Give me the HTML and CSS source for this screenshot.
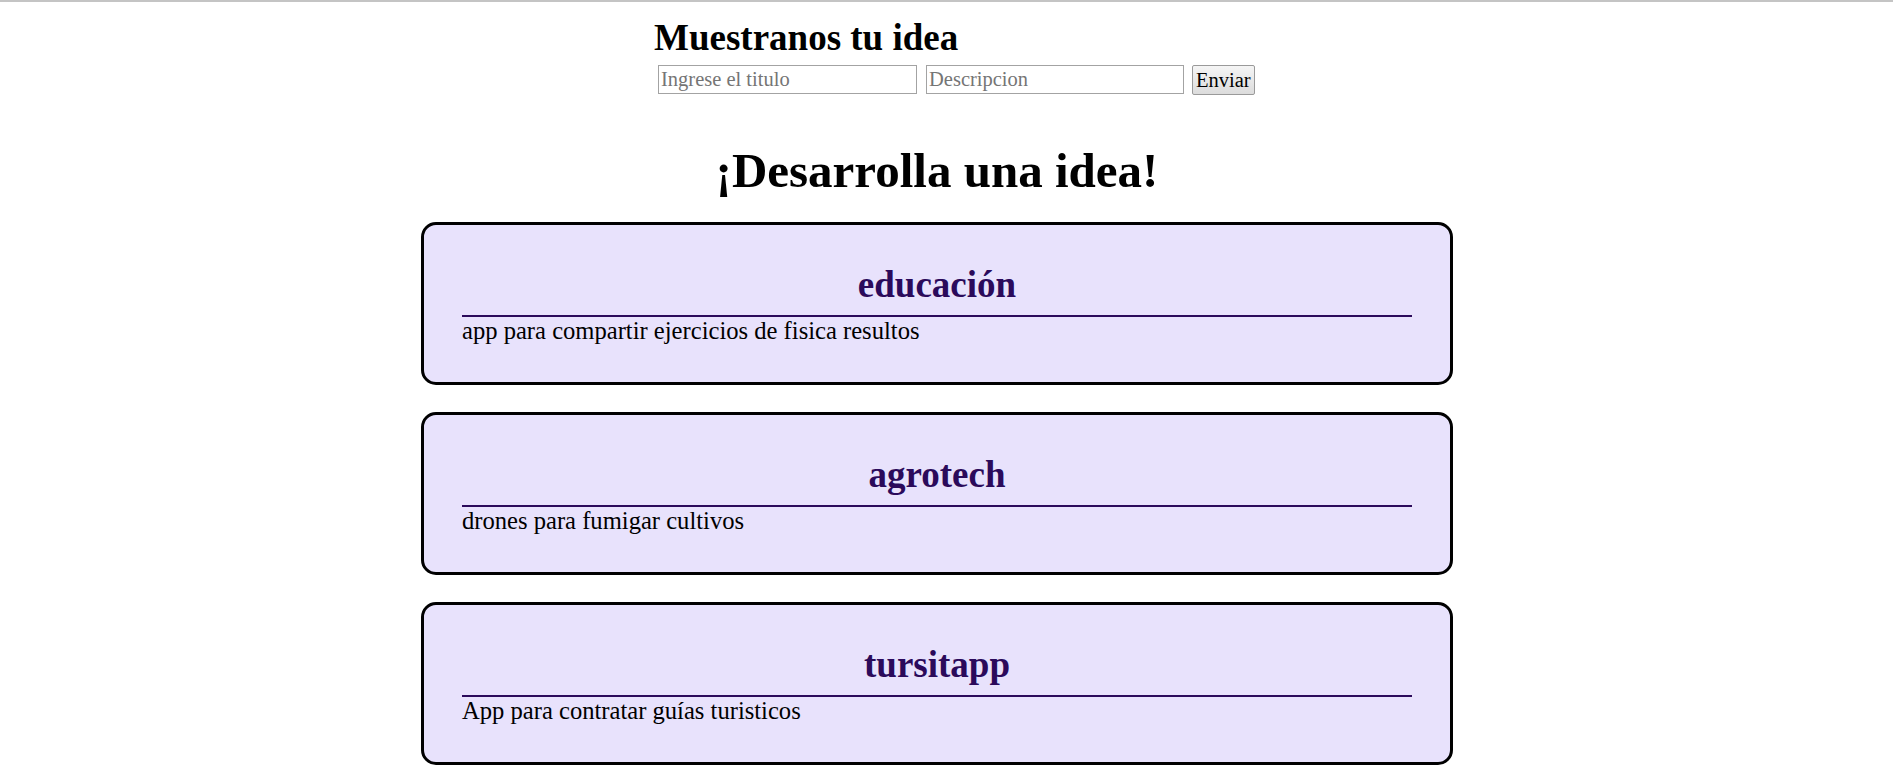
FILE: index.html
```html
<!DOCTYPE html>
<html lang="es">
<head>
<meta charset="utf-8">
<title>Ideas</title>
<link rel="stylesheet" href="styles.css">
</head>
<body>
<div class="page">
  <header class="intro">
    <h2 class="intro-title">Muestranos tu idea</h2>
    <form class="idea-form">
      <input type="text" class="field" placeholder="Ingrese el titulo">
      <input type="text" class="field field-desc" placeholder="Descripcion">
      <button type="button" class="send">Enviar</button>
    </form>
  </header>
  <main class="ideas">
    <h1 class="ideas-title">¡Desarrolla una idea!</h1>
    <article class="card">
      <h2 class="card-title">educación</h2>
      <p class="card-text">app para compartir ejercicios de fisica resultos</p>
    </article>
    <article class="card">
      <h2 class="card-title">agrotech</h2>
      <p class="card-text">drones para fumigar cultivos</p>
    </article>
    <article class="card">
      <h2 class="card-title">tursitapp</h2>
      <p class="card-text">App para contratar guías turisticos</p>
    </article>
  </main>
</div>
</body>
</html>
```

FILE: styles.css
```css
html {
  overflow-y: scroll;
  border-top: 2px solid #c4c4c4;
}

html::-webkit-scrollbar {
  width: 6px;
}

html::-webkit-scrollbar-track {
  background: #f0f0f0;
}

html::-webkit-scrollbar-thumb {
  background: #c1c1c1;
}

body {
  margin: 0;
  background: #ffffff;
  color: #000000;
  font-family: "Liberation Serif", "Times New Roman", serif;
  font-size: 24.6px;
}

.page {
  max-width: 1874px;
}

.intro {
  width: 566px;
  margin: 0 auto;
  padding-top: 14px;
}

.intro-title {
  margin: 0;
  font-size: 37px;
  font-weight: bold;
  white-space: nowrap;
}

.idea-form {
  display: flex;
  gap: 9px;
  margin: 6px 0 0 4px;
  white-space: nowrap;
}

.field {
  flex: 0 0 auto;
  box-sizing: border-box;
  width: 259px;
  height: 29px;
  margin: 0;
  padding: 0 2px;
  border: 1px solid #a3a3a3;
  border-radius: 0;
  background: #ffffff;
  font-family: "Liberation Serif", "Times New Roman", serif;
  font-size: 20.5px;
  color: #000000;
}

.field-desc {
  width: 258px;
}

.field::placeholder {
  color: #757575;
}

.send {
  flex: 0 0 auto;
  box-sizing: border-box;
  height: 30px;
  margin: 0 0 0 -1px;
  padding: 0 3px;
  border: 1px solid #9a9a9a;
  border-radius: 2px;
  background: linear-gradient(#f5f5f5, #dcdcdc);
  font-family: "Liberation Serif", "Times New Roman", serif;
  font-size: 20.5px;
  color: #000000;
}

.ideas {
  width: 1032px;
  margin: 0 auto;
}

.ideas-title {
  margin: 47px 0 23px;
  font-size: 49px;
  font-weight: bold;
  text-align: center;
}

.card {
  margin-bottom: 27px;
  padding: 38px 38px 37px;
  border: 3px solid #000000;
  border-radius: 15px;
  background: #e8e2fc;
}

.card-title {
  margin: 0;
  padding-bottom: 9px;
  border-bottom: 2px solid #2b0a5b;
  color: #2b0a5b;
  font-size: 37px;
  font-weight: bold;
  text-align: center;
}

.card-text {
  margin: 0;
  font-size: 24.6px;
}
```
